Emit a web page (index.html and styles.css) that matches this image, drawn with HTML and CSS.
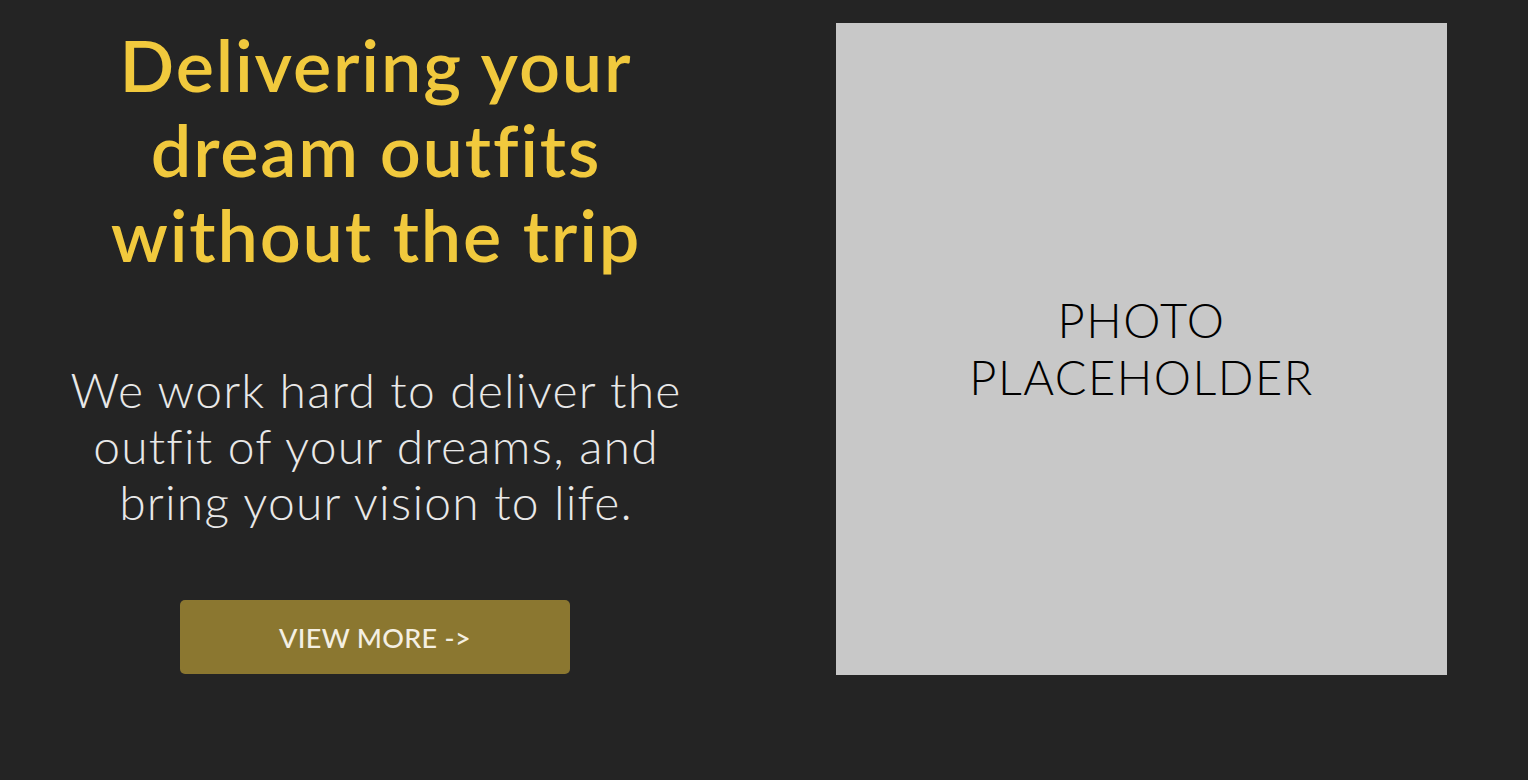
FILE: index.html
```html
<!DOCTYPE html>
<html lang="en">
<head>
<meta charset="utf-8">
<title>Hero</title>
<link rel="stylesheet" href="styles.css">
</head>
<body>
<main class="hero">
  <section class="hero-text">
    <h1 class="headline">Delivering your<br>dream outfits<br>without the trip</h1>
    <p class="lead">We work hard to deliver the<br>outfit of your dreams, and<br>bring your vision to life.</p>
    <a class="btn" href="#">VIEW MORE -&gt;</a>
  </section>
  <section class="hero-media">
    <div class="photo">PHOTO<br>PLACEHOLDER</div>
  </section>
</main>
</body>
</html>
```

FILE: styles.css
```css
html, body {
  margin: 0;
  padding: 0;
  background: #242424;
  height: 100%;
}
body {
  font-family: "Lato", "Open Sans", sans-serif;
}
.hero {
  display: flex;
  align-items: flex-start;
  padding-top: 22px;
}
.hero-text {
  width: 752px;
  display: flex;
  flex-direction: column;
  align-items: center;
  text-align: center;
}
.headline {
  margin: 0;
  color: #f1c93d;
  font-weight: 600;
  font-size: 72px;
  line-height: 85px;
  letter-spacing: 1.8px;
}
.lead {
  margin: 85px 0 0;
  color: #e8e8e8;
  font-weight: 300;
  font-size: 48px;
  line-height: 56px;
  letter-spacing: 1.2px;
}
.btn {
  margin-top: 70px;
  margin-left: -2px;
  width: 390px;
  height: 74px;
  display: flex;
  align-items: center;
  justify-content: center;
  background: #8b7730;
  border-radius: 5px;
  color: #f4efe2;
  text-decoration: none;
  font-size: 27px;
  font-weight: 500;
  letter-spacing: 0.3px;
}
.hero-media {
  margin-left: 84px;
  margin-top: 1px;
}
.photo {
  width: 611px;
  height: 652px;
  background: #c8c8c8;
  display: flex;
  align-items: center;
  justify-content: center;
  text-align: center;
  color: #000;
  font-size: 47px;
  font-weight: 300;
  line-height: 57px;
  letter-spacing: 1.5px;
}
```
